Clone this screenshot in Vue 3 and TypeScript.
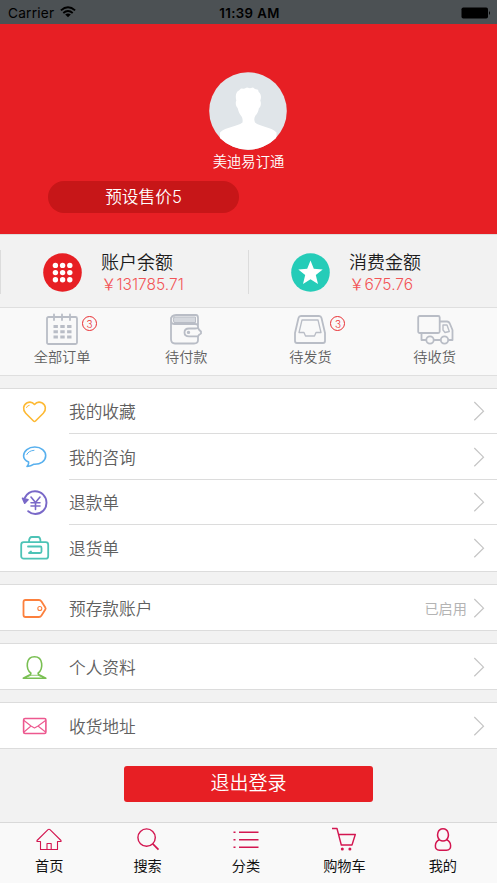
<script setup lang="ts">
interface Row { label: string; icon: string; note?: string }

const groups: Row[][] = [
  [
    { label: '我的收藏', icon: 'heart' },
    { label: '我的咨询', icon: 'chat' },
    { label: '退款单', icon: 'refund' },
    { label: '退货单', icon: 'bag' },
  ],
  [{ label: '预存款账户', icon: 'tag', note: '已启用' }],
  [{ label: '个人资料', icon: 'person' }],
  [{ label: '收货地址', icon: 'mail' }],
]

const orders = [
  { label: '全部订单', icon: 'calendar', badge: 3 },
  { label: '待付款', icon: 'wallet', badge: 0 },
  { label: '待发货', icon: 'tray', badge: 3 },
  { label: '待收货', icon: 'truck', badge: 0 },
]

const tabs = [
  { label: '首页', icon: 'home' },
  { label: '搜索', icon: 'search' },
  { label: '分类', icon: 'list' },
  { label: '购物车', icon: 'cart' },
  { label: '我的', icon: 'me' },
]
</script>

<template>
  <div class="page">
    <header class="status">
      <div class="carrier">
        <span>Carrier</span>
        <svg class="wifi" width="16" height="12" viewBox="0 0 16 12" fill="none" stroke="#000" stroke-width="1.9">
          <path d="M.9 4.4Q8-1.8 15.1 4.4M3.3 7Q8 3 12.7 7" />
          <path d="M5.2 8.6Q8 6.3 10.8 8.6L8 11.3Z" fill="#000" stroke="none" />
        </svg>
      </div>
      <span class="time">11:39 AM</span>
      <svg class="battery" width="30" height="12" viewBox="0 0 30 12">
        <rect x=".5" y=".5" width="26.5" height="11" rx="1.8" />
        <path d="M28 4Q30 6 28 8Z" />
      </svg>
    </header>

    <section class="hero">
      <svg class="avatar" width="78" height="78" viewBox="0 0 78 78">
        <defs><clipPath id="face"><circle cx="39" cy="39" r="38.8" /></clipPath></defs>
        <g clip-path="url(#face)">
          <rect width="78" height="78" fill="#e0e5e9" />
          <path fill="#fff" d="M33.500 50.500C34 47 33.200 45 31.500 43C29.800 40.800 29.300 38 28.600 36C26.800 34.500 26.200 30.500 27.300 28.500C26 23.500 27.200 19.500 30 18.500L32 16.500L35 16.700L38 15.500L41 16.200L44 15.600L46 17L49 17.700L49.700 20C52.200 22 52.500 25.500 51.300 28.500C52.500 31 51.800 35 50 36C49.300 39 48.500 41.500 46.500 43.500C45 46 45 48 46 50.500C51 55 62 54.500 67.500 60.500V79H11V60.500C17 54.500 28 55 33.500 50.500Z" />
        </g>
      </svg>
      <div class="name">美迪易订通</div>
      <div class="level">预设售价5</div>
    </section>

    <section class="balances">
      <div class="balance">
        <svg width="39" height="39" viewBox="0 0 39 39">
          <circle cx="19.500" cy="19.500" r="19.300" fill="#e71f24" />
          <g fill="#fff">
            <template v-for="r in 3" :key="r">
              <circle v-for="c in 3" :key="c" :cx="5.200 + c * 7.200" :cy="5.200 + r * 7.200" r="2.700" />
            </template>
          </g>
        </svg>
        <div class="sum"><b>账户余额</b><span>￥131785.71</span></div>
      </div>
      <div class="balance">
        <svg width="39" height="39" viewBox="0 0 39 39">
          <circle cx="19.500" cy="19.500" r="19.300" fill="#25ccb8" />
          <path fill="#fff" d="M19.500 7.500L22.800 15.800L31.700 16.400L24.800 22.100L27 31L19.500 26.200L12 31L14.200 22.100L7.300 16.400L16.200 15.800Z" />
        </svg>
        <div class="sum"><b>消费金额</b><span>￥675.76</span></div>
      </div>
    </section>

    <nav class="orders">
      <div v-for="o in orders" :key="o.label" class="order">
        <div class="order-icon">
          <svg width="38" height="34" viewBox="0 0 38 34" fill="none" stroke="#b9bdc6" stroke-width="1.800" stroke-linejoin="round" stroke-linecap="round">
            <template v-if="o.icon === 'calendar'">
              <rect x="4" y="4" width="30" height="27" rx="1.500" />
              <path d="M11 1.500V7M19 1.500V7M27 1.500V7" />
              <path d="M10.500 13.500H28.500M10.500 18.700H28.500M10.500 24H28.500" stroke-width="3" stroke-linecap="butt" stroke-dasharray="4.400 2.400" />
            </template>
            <template v-else-if="o.icon === 'wallet'">
              <path d="M4 5V26Q4 30.500 8 30.500H27Q31 30.500 31 27V24M31 15V13Q31 11 28 11H7Q4 11 4 7Q4 2 9 2H29Q31 2 31 5V12" />
              <path d="M31 15Q29.500 15.500 28 15.500H22Q17.500 15.500 17.500 19.500Q17.500 23.300 22 23.300H31Q32 21.500 34 20.500V18.500Q32 17 31 15Z" />
              <path d="M7 4H28.500V9.500H7Q5.500 7 7 4Z" fill="#d5d8de" stroke-width="1" />
              <circle cx="21.500" cy="19.400" r=".8" />
            </template>
            <template v-else-if="o.icon === 'tray'">
              <path d="M7.500 5Q8 3 10 3H28Q30 3 30.500 5L34 20V28Q34 30 32 30H6Q4 30 4 28V20Z" />
              <path d="M11 7H27L30 19.500H25L23.500 23H14.500L13 19.500H8Z" stroke-width="1.300" />
            </template>
            <template v-else>
              <rect x="2.200" y="3" width="21.500" height="17" rx="1.500" />
              <path d="M24 8.500H31Q33 8.500 34 11L36.500 17V27H33M24.500 27H18.500M10 27H5.500V21" />
              <path d="M27 12H31L33.300 18.500L29 19.500L27 17Z" stroke-width="1.400" />
              <circle cx="14" cy="27" r="3.700" /><circle cx="28.500" cy="27" r="3.700" />
            </template>
          </svg>
          <i v-if="o.badge" class="badge">{{ o.badge }}</i>
        </div>
        <span>{{ o.label }}</span>
      </div>
    </nav>

    <main class="groups">
      <section v-for="(group, g) in groups" :key="g" class="group">
        <div v-for="row in group" :key="row.label" class="row">
          <svg class="row-icon" width="30" height="30" viewBox="0 0 30 30" fill="none" stroke-width="1.600" stroke-linejoin="round" stroke-linecap="round">
            <g v-if="row.icon === 'heart'" stroke="#fdb934">
              <path d="M14.500 7.500C12.500 5 9.500 4.700 7.200 5.700C3 7.700 2.500 13 5.700 16.300L13.500 24Q14.500 25 15.500 24L23.300 16.300C26.500 13 26 7.700 21.800 5.700C19.500 4.700 16.500 5 14.500 7.500Z" />
              <path d="M6.500 10.500Q7.200 8.500 9.200 8.300" stroke-width="1" />
            </g>
            <g v-else-if="row.icon === 'chat'" stroke="#58b0ee">
              <path d="M7 24.500Q9.200 22 8.600 20C5.200 18.500 3.600 16.300 3.600 14C3.600 9 8.500 5 14.800 5C21.200 5 25.700 9 25.700 13.800C25.700 19 20.500 22.500 14 22.200Q11 24.500 7 24.500Z" />
              <path d="M6.800 12.500Q8.500 8.700 14 8.300" stroke-width="1" />
            </g>
            <g v-else-if="row.icon === 'refund'" stroke="#7968c8">
              <path d="M5 9.500C7 5.500 11 3.200 15 3.200C21.500 3.200 26.500 8.300 26.500 14.700C26.500 21.100 21.500 26 15.200 26Q11.500 26 8.200 23.200" stroke-width="1.900" />
              <path d="M2.500 10.200L8 11.700L4.700 15.100Z" fill="#7968c8" />
              <path d="M11 9L15.500 14.500L20 9M15.500 14.500V21.500M11 14.800H20M11 18H20" />
            </g>
            <g v-else-if="row.icon === 'bag'" stroke="#4dc3b6" stroke-width="1.800">
              <rect x="1.200" y="9.200" width="27" height="16.500" rx="2.500" />
              <path d="M9 9Q9 4 12 4H18Q20.500 4 20.500 9M8 13.500H20.500Q21.500 13.500 21.500 15V18.500Q21.500 20 20 20H9L11 18.500" />
            </g>
            <g v-else-if="row.icon === 'tag'" stroke="#fc803d">
              <path d="M5.500 7H19Q20.500 7 21.500 8.500L25.300 14.500Q26 15.500 25.300 16.500L21.500 22.500Q20.500 24 19 24H5.500Q3.500 24 3.500 22V9Q3.500 7 5.500 7Z" stroke-width="1.800" />
              <circle cx="19.800" cy="15.500" r="2" stroke-width="1.100" />
            </g>
            <g v-else-if="row.icon === 'person'" stroke="#79bf52">
              <path d="M10.800 21C5.600 17 5.600 4.700 14.500 4.700C23.400 4.700 23.400 17 18.200 21Q17.800 22.700 20 23.300L25.800 26.300H3.300L9 23.300Q11.200 22.700 10.800 21Z" />
              <path d="M5 25.800L11 23.300H18L24 25.800" stroke-width=".8" />
            </g>
            <g v-else stroke="#ed588f">
              <rect x="3.600" y="7.500" width="22.300" height="15" rx="1.500" />
              <path d="M4 9.500L11 15L14.500 17L18 15L25.500 9.500M4 21L11 15M25.500 21L18 15" stroke-width="1.100" />
            </g>
          </svg>
          <div class="row-body">
            <span>{{ row.label }}</span>
            <em v-if="row.note">{{ row.note }}</em>
            <svg class="arrow" width="12" height="20" viewBox="0 0 12 20" fill="none" stroke="#c5c5c5" stroke-width="1.200"><path d="M1.300 1L10.500 10.200L1.300 19.200" /></svg>
          </div>
        </div>
      </section>
    </main>

    <button class="logout">退出登录</button>

    <footer class="tabs">
      <div v-for="t in tabs" :key="t.label" class="tab">
        <svg width="28" height="26" viewBox="0 0 28 26" fill="none" stroke="#d31650" stroke-width="1.400" stroke-linejoin="round">
          <path v-if="t.icon === 'home'" stroke-width="1.100" d="M2 13.500L13 2.700Q14 1.700 15 2.700L26 13.500V14.500H22.500V22.500H5.500V14.500H2ZM12 22.500V16.500H16.200V22.500" />
          <g v-else-if="t.icon === 'search'"><circle cx="12.600" cy="10.600" r="8.700" /><path d="M18.800 16.800L24.500 22.600" stroke-width="1.700" /></g>
          <path v-else-if="t.icon === 'list'" stroke-width="1.500" d="M1.500 5.300H3.500M1.500 12.700H3.500M1.500 20.200H3.500M7 5.300H26.500M7 12.700H26.500M7 20.200H26.500" />
          <g v-else-if="t.icon === 'cart'"><path d="M2 1.500H7L11.300 18H22L25.300 7.500H8.500" /><circle cx="12.300" cy="22" r="1.500" fill="#d31650" stroke="none" /><circle cx="19.900" cy="22" r="1.500" fill="#d31650" stroke="none" /></g>
          <path v-else stroke-width="1.500" d="M10.500 12.800C7 9 8.500 1.800 14 1.800C19.500 1.800 21 9 17.500 12.800C22.500 14.500 23.500 23.300 17.500 23.300H10.500C4.500 23.300 5.500 14.500 10.500 12.800Q14 15 17.500 12.800" />
        </svg>
        <span>{{ t.label }}</span>
      </div>
    </footer>
  </div>
</template>

<style>
body { margin: 0; background: #f2f2f2; }
</style>

<style scoped>
.page { display: flex; flex-direction: column; width: 497px; height: 883px; overflow: hidden; background: #f2f2f2; font-family: Inter, "Noto Sans CJK SC", sans-serif; font-weight: 350; color: #606060; }
.page * { box-sizing: border-box; }
svg { display: block; flex: none; }
.status { display: grid; grid-template-columns: 1fr auto 1fr; align-items: center; height: 24px; padding: 1px 6px 0 8px; background: #4c5154; color: #000; font-size: 13.700px; font-weight: 400; line-height: 24px; }
.carrier { display: flex; gap: 6px; align-items: center; letter-spacing: .2px; }
.wifi { margin-top: -2px; }
.time { font-weight: 600; font-size: 13.200px; letter-spacing: .4px; }
.battery { justify-self: end; }
.hero { display: flex; flex-direction: column; align-items: center; height: 210px; padding-top: 48px; background: #e71f24; color: #fff; }
.avatar { margin-right: 1px; }
.name { height: 24px; line-height: 24px; font-size: 14.300px; }
.level { align-self: flex-start; width: 191px; height: 32px; margin: 7px 0 0 48px; border-radius: 16px; background: #c71618; font-size: 16.700px; line-height: 33px; text-align: center; }
.balances { display: flex; height: 74px; padding-top: 15px; border-top: 1px solid #ddd; border-bottom: 1px solid #dfdfdf; }
.balance { display: flex; gap: 19px; width: 248px; height: 44px; padding-left: 42px; align-items: center; border-left: 1.500px solid #dcdcdc; }
.sum { display: flex; flex-direction: column; padding-top: 1px; }
.sum b { font-size: 18px; line-height: 23px; font-weight: 350; color: #1c1c1c; }
.sum span { font-size: 15.500px; line-height: 21px; color: #f25557; }
.orders { display: flex; height: 68px; background: #f9f9f9; border-bottom: 1px solid #dfdfdf; }
.order { display: flex; flex-direction: column; align-items: center; width: 124.200px; padding-top: 5px; font-size: 14.200px; line-height: 20px; }
.order-icon { position: relative; height: 34px; }
.badge { position: absolute; left: 39px; top: 3px; width: 15px; height: 15px; border: 1px solid #e92e32; border-radius: 50%; color: #e92e32; font-size: 10px; line-height: 15px; font-style: normal; text-align: center; }
.groups { display: flex; flex-direction: column; gap: 12px; padding-top: 12px; }
.group { border-top: 1px solid #dcdcdc; border-bottom: 1px solid #dcdcdc; background: #fff; }
.row { display: flex; align-items: center; height: 45px; padding-left: 20px; }
.row:nth-child(even) { height: 46px; }
.row-icon { margin-right: 19px; }
.row-body { display: flex; flex: 1; align-items: center; height: 100%; padding-right: 12px; border-bottom: 1px solid #dcdcdc; font-size: 16.700px; }
.row:last-child .row-body { border-bottom: 0; }
.row-body em { margin-left: auto; margin-right: 6px; font-style: normal; font-size: 14.200px; font-weight: 400; color: #b4b4b4; }
.arrow { margin-left: auto; }
.row-body em + .arrow { margin-left: 0; }
.logout { display: block; flex: none; width: 249px; height: 36px; margin: 17px auto 0 124px; padding: 0; border: 0; border-radius: 3px; background: #e71f24; color: #fff; font: inherit; font-size: 19px; line-height: 36px; }
.tabs { display: flex; height: 61px; margin-top: auto; padding-right: 5px; border-top: 1px solid #d9d9d9; background: #f9f9f9; color: #111; }
.tab { display: flex; flex: 1; flex-direction: column; align-items: center; padding-top: 4px; font-size: 14.200px; line-height: 25px; font-weight: 400; }
</style>
